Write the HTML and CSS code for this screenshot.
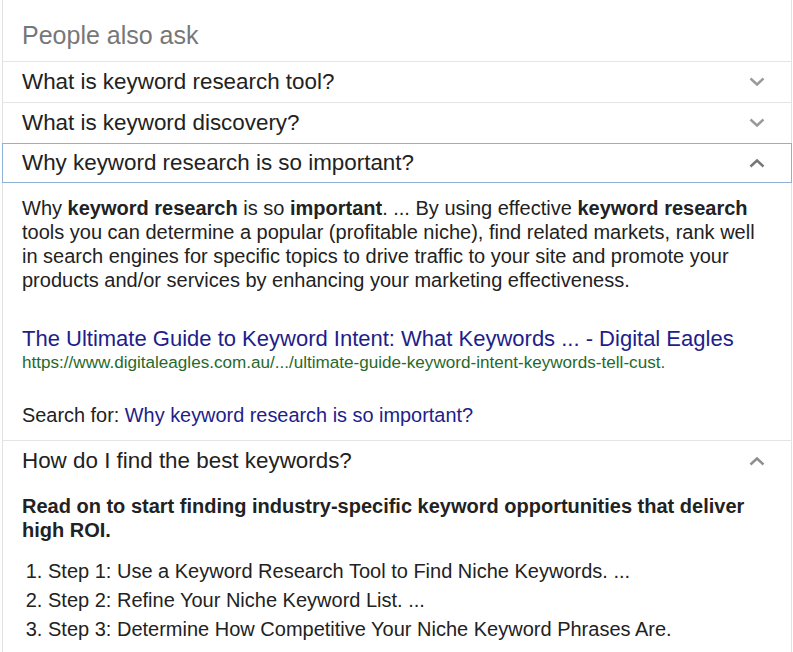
FILE: index.html
```html
<!DOCTYPE html>
<html lang="en">
<head>
<meta charset="utf-8">
<title>People also ask</title>
<link rel="stylesheet" href="styles.css">
</head>
<body>
<div class="paa">
  <div class="paa-title">People also ask</div>

  <div class="q-row">
    <span class="q-text">What is keyword research tool?</span>
    <svg class="chev" width="16" height="10" viewBox="0 0 16 10"><path d="M1.5 1.5 L8 7.5 L14.5 1.5" fill="none" stroke="#9a9a9a" stroke-width="2.4"/></svg>
  </div>

  <div class="q-row">
    <span class="q-text">What is keyword discovery?</span>
    <svg class="chev" width="16" height="10" viewBox="0 0 16 10"><path d="M1.5 1.5 L8 7.5 L14.5 1.5" fill="none" stroke="#9a9a9a" stroke-width="2.4"/></svg>
  </div>

  <div class="q-row q-open q-focus">
    <span class="q-text">Why keyword research is so important?</span>
    <svg class="chev" width="16" height="10" viewBox="0 0 16 10"><path d="M1.5 8.5 L8 2.5 L14.5 8.5" fill="none" stroke="#777" stroke-width="2.4"/></svg>
  </div>
  <div class="answer">
    <p class="snippet">Why <b>keyword research</b> is so <b>important</b>. ... By using effective <b>keyword research</b> tools you can determine a popular (profitable niche), find related markets, rank well in search engines for specific topics to drive traffic to your site and promote your products and/or services by enhancing your marketing effectiveness.</p>
    <div class="result">
      <a class="result-title" href="#">The Ultimate Guide to Keyword Intent: What Keywords ... - Digital Eagles</a>
      <div class="result-url">https://www.digitaleagles.com.au/.../ultimate-guide-keyword-intent-keywords-tell-cust.</div>
    </div>
    <div class="search-for">Search for: <a href="#">Why keyword research is so important?</a></div>
  </div>

  <div class="q-row q-open">
    <span class="q-text">How do I find the best keywords?</span>
    <svg class="chev" width="16" height="10" viewBox="0 0 16 10"><path d="M1.5 8.5 L8 2.5 L14.5 8.5" fill="none" stroke="#8f8f8f" stroke-width="2.4"/></svg>
  </div>
  <div class="answer answer-last">
    <p class="lead">Read on to start finding industry-specific keyword opportunities that deliver high ROI.</p>
    <ol class="steps">
      <li>Step 1: Use a Keyword Research Tool to Find Niche Keywords. ...</li>
      <li>Step 2: Refine Your Niche Keyword List. ...</li>
      <li>Step 3: Determine How Competitive Your Niche Keyword Phrases Are.</li>
    </ol>
  </div>
</div>
</body>
</html>
```

FILE: styles.css
```css
html, body {
  margin: 0;
  padding: 0;
  background: #fff;
}

body {
  font-family: "Liberation Sans", Arial, sans-serif;
  color: #222;
}

.paa {
  margin-left: 2px;
  width: 788px;
  min-height: 652px;
  border-left: 1px solid #e2e2e2;
  border-right: 1px solid #e2e2e2;
}

.paa-title {
  font-size: 25px;
  line-height: 28px;
  color: #777;
  padding: 21px 19px 12px 19px;
}

.q-row {
  display: flex;
  align-items: center;
  justify-content: space-between;
  height: 40px;
  border-top: 1px solid #e4e4e4;
  padding: 0 26px 0 19px;
  margin-left: -1px;
  margin-right: -1px;
  border-left: 1px solid transparent;
  border-right: 1px solid transparent;
}

.q-text {
  font-size: 22.4px;
  line-height: 26px;
  color: #222;
}

.chev {
  display: block;
}

.q-focus {
  height: 38px;
  border: 1px solid #8fb1d8;
}

.answer {
  padding: 13px 30px 13px 19px;
}

.snippet {
  margin: 0;
  font-size: 20px;
  line-height: 24px;
  color: #222;
}

.snippet b {
  font-weight: bold;
}

.result {
  margin-top: 34px;
}

.result-title {
  display: block;
  font-size: 22px;
  line-height: 26px;
  color: #221d8a;
  text-decoration: none;
}

.result-url {
  font-size: 17.1px;
  line-height: 22px;
  color: #1f6a2a;
}

.search-for {
  margin-top: 29px;
  font-size: 19.9px;
  line-height: 24px;
  color: #222;
}

.search-for a {
  color: #221d8a;
  text-decoration: none;
}

.lead {
  margin: 0;
  font-size: 20px;
  line-height: 24px;
  font-weight: bold;
  color: #222;
}

.steps {
  margin: 15px 0 0 0;
  padding-left: 26px;
  font-size: 20px;
  line-height: 29px;
  color: #222;
}

.answer-last {
  padding-bottom: 0;
}
```
